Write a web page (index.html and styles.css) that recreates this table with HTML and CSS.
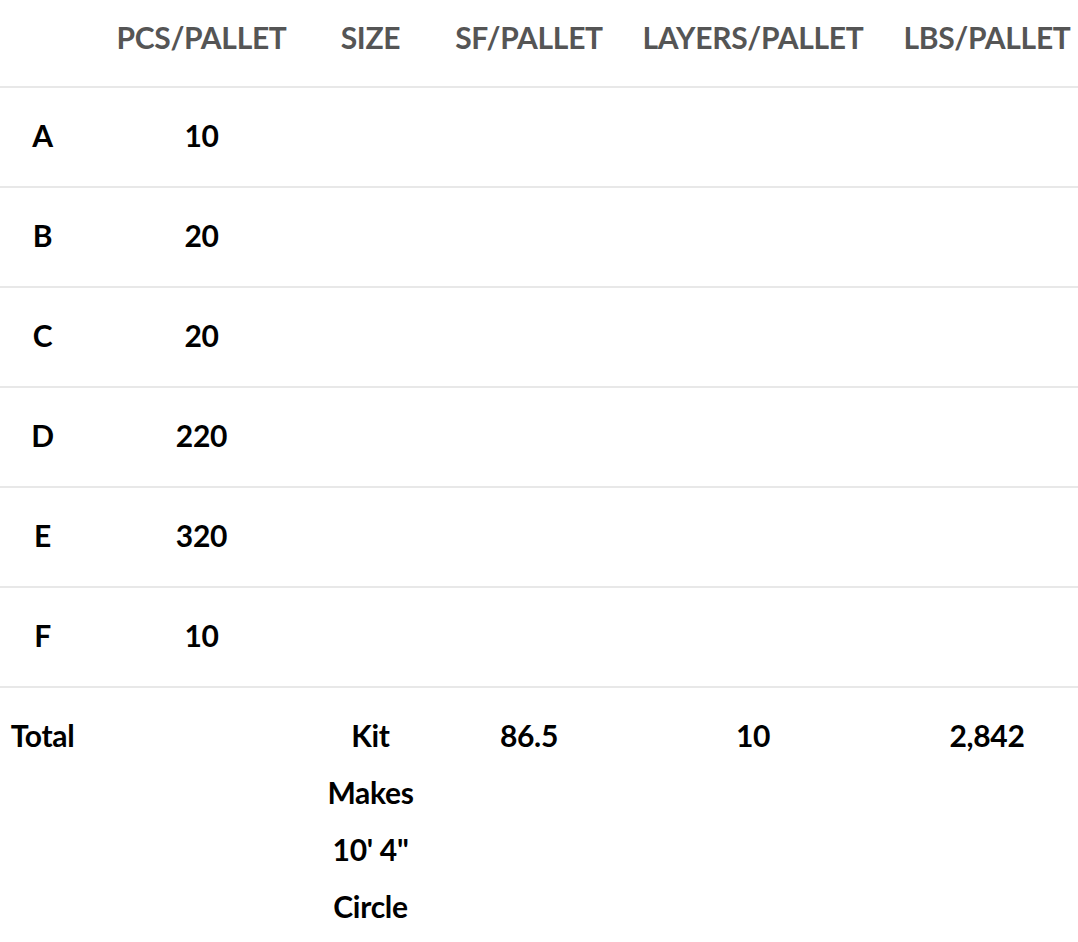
FILE: index.html
```html
<!DOCTYPE html>
<html lang="en">
<head>
<meta charset="utf-8">
<title>Pallet table</title>
<link rel="stylesheet" href="styles.css">
</head>
<body>
<table class="pallet-table">
  <colgroup>
    <col class="col-label">
    <col class="col-pcs">
    <col class="col-size">
    <col class="col-sf">
    <col class="col-layers">
    <col class="col-lbs">
  </colgroup>
  <thead>
    <tr>
      <th></th>
      <th>PCS/PALLET</th>
      <th>SIZE</th>
      <th>SF/PALLET</th>
      <th>LAYERS/PALLET</th>
      <th>LBS/PALLET</th>
    </tr>
  </thead>
  <tbody>
    <tr><td>A</td><td>10</td><td></td><td></td><td></td><td></td></tr>
    <tr><td>B</td><td>20</td><td></td><td></td><td></td><td></td></tr>
    <tr><td>C</td><td>20</td><td></td><td></td><td></td><td></td></tr>
    <tr><td>D</td><td>220</td><td></td><td></td><td></td><td></td></tr>
    <tr><td>E</td><td>320</td><td></td><td></td><td></td><td></td></tr>
    <tr><td>F</td><td>10</td><td></td><td></td><td></td><td></td></tr>
    <tr class="total-row"><td>Total</td><td></td><td>Kit Makes 10'&nbsp;4" Circle</td><td>86.5</td><td>10</td><td>2,842</td></tr>
  </tbody>
</table>
</body>
</html>
```

FILE: styles.css
```css
html, body {
  margin: 0;
  padding: 0;
  background: #fff;
  overflow: hidden;
}

.pallet-table {
  margin-left: -12px;
  width: 1103px;
  table-layout: fixed;
  border-collapse: collapse;
  font-family: Lato, "Open Sans", sans-serif;
  font-weight: 700;
  font-size: 30px;
  letter-spacing: -0.3px;
  line-height: 57px;
  color: #000;
}

.col-label { width: 109px; }
.col-pcs { width: 209px; }
.col-size { width: 129px; }
.col-sf { width: 188px; }
.col-layers { width: 260px; }
.col-lbs { width: 208px; }

.pallet-table th {
  color: #555;
  white-space: nowrap;
  text-align: center;
  padding: 9px 10px 20px;
  border-bottom: 2px solid #e8e8e8;
}

.pallet-table td {
  text-align: center;
  vertical-align: top;
  padding: 19px 10px 22px;
  border-bottom: 2px solid #e8e8e8;
}

.pallet-table .total-row td {
  border-bottom: none;
}
```
